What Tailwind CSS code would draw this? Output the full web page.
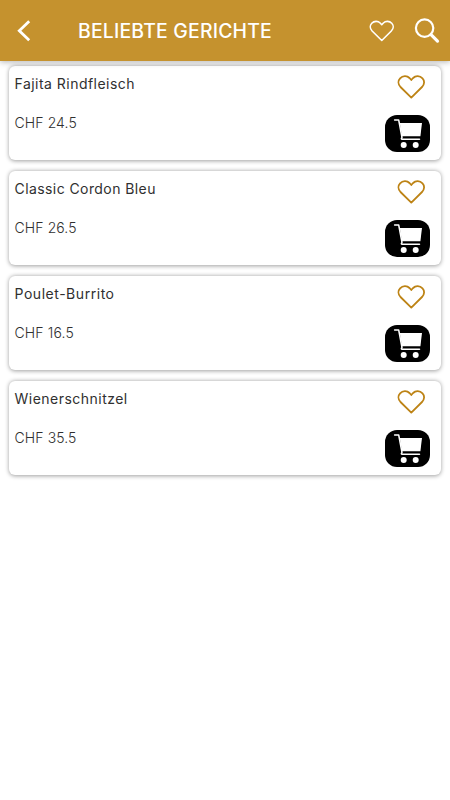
<!DOCTYPE html>
<html lang="de">
<head>
<meta charset="utf-8">
<title>Beliebte Gerichte</title>
<script src="https://cdn.jsdelivr.net/npm/@tailwindcss/browser@4"></script>
</head>
<body class="h-[800px] overflow-hidden bg-white font-['Inter','Liberation_Sans',sans-serif]">
<svg class="hidden">
  <symbol id="heart" viewBox="0 0 28 24"><path d="M14.300 22.600 3.500 12C.9 9.300.9 5.600 3.100 3.300 5.700.600 10 .500 12.500 3L14.300 5l1.800-2c2.500-2.500 6.800-2.400 9.400.300 2.200 2.300 2.200 6-.500 8.700Z" fill="none" stroke="currentColor" stroke-width="1.800" stroke-linejoin="round"/></symbol>
  <symbol id="cart" viewBox="0 0 45 37">
    <path d="M9.600 5H13.700L17 22.500Q15.600 24.300 17.200 24.300H34.500" fill="none" stroke="currentColor" stroke-width="1.500" stroke-linecap="round" stroke-linejoin="round"/>
    <path d="M14.800 8H37L35.400 21.300H17Z" fill="currentColor"/>
    <circle cx="18.700" cy="29.900" r="3" fill="currentColor"/><circle cx="30.700" cy="29.900" r="3" fill="currentColor"/>
  </symbol>
</svg>
<header class="relative flex h-[61px] items-center bg-[#c5922e] pl-[17px] pr-[10px] text-white shadow-[0_1px_6px_rgba(0,0,0,0.3)]">
  <svg class="h-6 w-[14px]" viewBox="0 0 14 24" fill="none" stroke="currentColor" stroke-width="2.800"><path d="M12.200 2.200 2.300 11.700l9.900 9.500"/></svg>
  <h1 class="ml-[47px] text-[19.400px] font-medium leading-6 tracking-[0.2px] whitespace-nowrap">BELIEBTE GERICHTE</h1>
  <svg class="ml-auto h-[22px] w-[25px]"><use href="#heart"/></svg>
  <svg class="ml-[20px] h-[26px] w-[26px]" viewBox="0 0 26 26" fill="none" stroke="currentColor"><circle cx="10.600" cy="10.100" r="8.700" stroke-width="2.200"/><path d="m17 16.600 6.500 6.500" stroke-width="3.200" stroke-linecap="round"/></svg>
</header>
<main class="flex flex-col gap-[11px] px-[9px] pt-[5px] text-[14px] leading-5 text-[#303030]">
  <article class="flex h-[94px] justify-between rounded-[6px] bg-white pl-[5.5px] pr-[11px] shadow-[0_0.5px_4px_rgba(0,0,0,0.38)]">
    <div class="pt-[8px]"><h2 class="tracking-[0.47px]">Fajita Rindfleisch</h2><p class="mt-[19px] font-light tracking-[0.1px]">CHF 24.5</p></div>
    <div class="flex w-[45px] flex-col pt-[9px]"><svg class="ml-[12px] h-6 w-7 text-[#bd8315]"><use href="#heart"/></svg><div class="mt-4 h-[37px] rounded-[12px] bg-black text-white"><svg class="h-[37px] w-[45px]"><use href="#cart"/></svg></div></div>
  </article>
  <article class="flex h-[94px] justify-between rounded-[6px] bg-white pl-[5.5px] pr-[11px] shadow-[0_0.5px_4px_rgba(0,0,0,0.38)]">
    <div class="pt-[8px]"><h2 class="tracking-[0.42px]">Classic Cordon Bleu</h2><p class="mt-[19px] font-light tracking-[0.1px]">CHF 26.5</p></div>
    <div class="flex w-[45px] flex-col pt-[9px]"><svg class="ml-[12px] h-6 w-7 text-[#bd8315]"><use href="#heart"/></svg><div class="mt-4 h-[37px] rounded-[12px] bg-black text-white"><svg class="h-[37px] w-[45px]"><use href="#cart"/></svg></div></div>
  </article>
  <article class="flex h-[94px] justify-between rounded-[6px] bg-white pl-[5.5px] pr-[11px] shadow-[0_0.5px_4px_rgba(0,0,0,0.38)]">
    <div class="pt-[8px]"><h2 class="tracking-[0.54px]">Poulet-Burrito</h2><p class="mt-[19px] font-light tracking-[0.15px]">CHF 16.5</p></div>
    <div class="flex w-[45px] flex-col pt-[9px]"><svg class="ml-[12px] h-6 w-7 text-[#bd8315]"><use href="#heart"/></svg><div class="mt-4 h-[37px] rounded-[12px] bg-black text-white"><svg class="h-[37px] w-[45px]"><use href="#cart"/></svg></div></div>
  </article>
  <article class="flex h-[94px] justify-between rounded-[6px] bg-white pl-[5.5px] pr-[11px] shadow-[0_0.5px_4px_rgba(0,0,0,0.38)]">
    <div class="pt-[8px]"><h2 class="tracking-[0.48px]">Wienerschnitzel</h2><p class="mt-[19px] font-light tracking-[0.1px]">CHF 35.5</p></div>
    <div class="flex w-[45px] flex-col pt-[9px]"><svg class="ml-[12px] h-6 w-7 text-[#bd8315]"><use href="#heart"/></svg><div class="mt-4 h-[37px] rounded-[12px] bg-black text-white"><svg class="h-[37px] w-[45px]"><use href="#cart"/></svg></div></div>
  </article>
</main>
</body>
</html>
